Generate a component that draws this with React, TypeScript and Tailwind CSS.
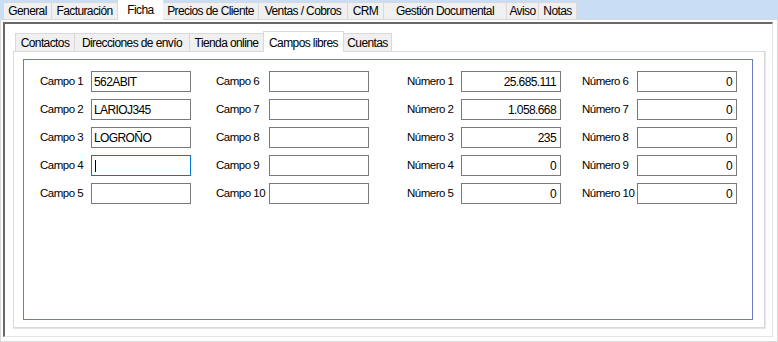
import React from "react";

const font = { fontFamily: '"Liberation Sans", Arial, sans-serif' };

const topTabs = [
  { label: "General", w: 48 },
  { label: "Facturación", w: 66 },
  { label: "Ficha", w: 45, active: true },
  { label: "Precios de Cliente", w: 96 },
  { label: "Ventas / Cobros", w: 89 },
  { label: "CRM", w: 36 },
  { label: "Gestión Documental", w: 123 },
  { label: "Aviso", w: 32 },
  { label: "Notas", w: 38 },
];

const innerTabs = [
  { label: "Contactos", w: 59 },
  { label: "Direcciones de envío", w: 115 },
  { label: "Tienda online", w: 74 },
  { label: "Campos libres", w: 80, active: true },
  { label: "Cuentas", w: 48 },
];

type Field = { label: string; value: string; focused?: boolean };

const col1: Field[] = [
  { label: "Campo 1", value: "562ABIT" },
  { label: "Campo 2", value: "LARIOJ345" },
  { label: "Campo 3", value: "LOGROÑO" },
  { label: "Campo 4", value: "", focused: true },
  { label: "Campo 5", value: "" },
];
const col2: Field[] = [6, 7, 8, 9, 10].map((n) => ({ label: `Campo ${n}`, value: "" }));
const col3: Field[] = [
  { label: "Número 1", value: "25.685.111" },
  { label: "Número 2", value: "1.058.668" },
  { label: "Número 3", value: "235" },
  { label: "Número 4", value: "0" },
  { label: "Número 5", value: "0" },
];
const col4: Field[] = [6, 7, 8, 9, 10].map((n) => ({ label: `Número ${n}`, value: "0" }));

function Column({
  fields,
  labelW,
  numeric,
  className,
}: {
  fields: Field[];
  labelW: string;
  numeric?: boolean;
  className?: string;
}) {
  return (
    <div className={`flex flex-col gap-[7px] ${className ?? ""}`}>
      {fields.map((f) => (
        <div key={f.label} className="flex items-center">
          <span className={`${labelW} shrink-0 pt-px text-[11.5px] tracking-[-0.5px]`}>{f.label}</span>
          <div
            className={`relative flex h-[21px] w-[100px] items-center border bg-white ${
              f.focused ? "border-[#0078d7]" : "border-[#7a7a7a]"
            } ${numeric ? "justify-end pr-[4px]" : "pl-[2px]"}`}
          >
            {f.value}
            {f.focused && <span className="ml-[1px] h-[12px] w-px bg-black" />}
          </div>
        </div>
      ))}
    </div>
  );
}

export default function App() {
  return (
    <div
      className="flex h-[342px] w-[778px] flex-col bg-[#c9def5] text-[12px] tracking-[-0.6px] text-black"
      style={font}
    >
      {/* top tab strip */}
      <div className="flex h-[19px] items-end pl-[3px]">
        {topTabs.map((t) =>
          t.active ? (
            <div
              key={t.label}
              className="relative z-10 -mb-px flex h-[20px] items-start justify-center bg-white pt-[1px]"
              style={{ width: t.w }}
            >
              {t.label}
            </div>
          ) : (
            <div
              key={t.label}
              className="-ml-px flex h-[17px] items-center justify-center border border-b-0 border-[#d9d9d9] bg-[#f0f0f0] first:ml-0"
              style={{ width: t.w + 1 }}
            >
              {t.label}
            </div>
          )
        )}
      </div>

      {/* outer page */}
      <div className="flex-1 border border-[#d9d9d9] bg-white pl-[2px] pt-[2px]">
        <div className="h-[315px] w-[770px] border-b border-l-2 border-r border-t-2 border-b-[#e3e3e3] border-l-[#696969] border-r-[#e3e3e3] border-t-[#696969] pl-[8px] pt-[7px]">
          {/* inner tabs */}
          <div className="flex h-[20px] items-end pl-[2px]">
            {innerTabs.map((t) =>
              t.active ? (
                <div
                  key={t.label}
                  className="relative z-10 -mb-px -ml-px flex h-[21px] items-start justify-center border border-b-0 border-[#d9d9d9] bg-white pt-[2px]"
                  style={{ width: t.w + 1 }}
                >
                  {t.label}
                </div>
              ) : (
                <div
                  key={t.label}
                  className="-ml-px flex h-[18px] items-center justify-center border border-b-0 border-[#d9d9d9] bg-[#f0f0f0] pt-px first:ml-0"
                  style={{ width: t.w + 1 }}
                >
                  {t.label}
                </div>
              )
            )}
          </div>

          {/* tab page */}
          <div className="h-[278px] w-[753px] border-b-2 border-r-2 border-b-[#e6e6e6] border-r-[#e6e6e6]">
            <div className="h-[277px] w-[752px] border border-[#d9d9d9] bg-white pl-[9px] pt-[7px]">
              <div className="flex h-[261px] w-[730px] border border-[#6b7cc4] pl-[16px] pt-[11px]">
                <Column fields={col1} labelW="w-[51px]" />
                <Column fields={col2} labelW="w-[53px]" className="ml-[25px]" />
                <Column fields={col3} labelW="w-[54px]" numeric className="ml-[38px]" />
                <Column fields={col4} labelW="w-[55px]" numeric className="ml-[21px]" />
              </div>
            </div>
          </div>
        </div>
      </div>
    </div>
  );
}
